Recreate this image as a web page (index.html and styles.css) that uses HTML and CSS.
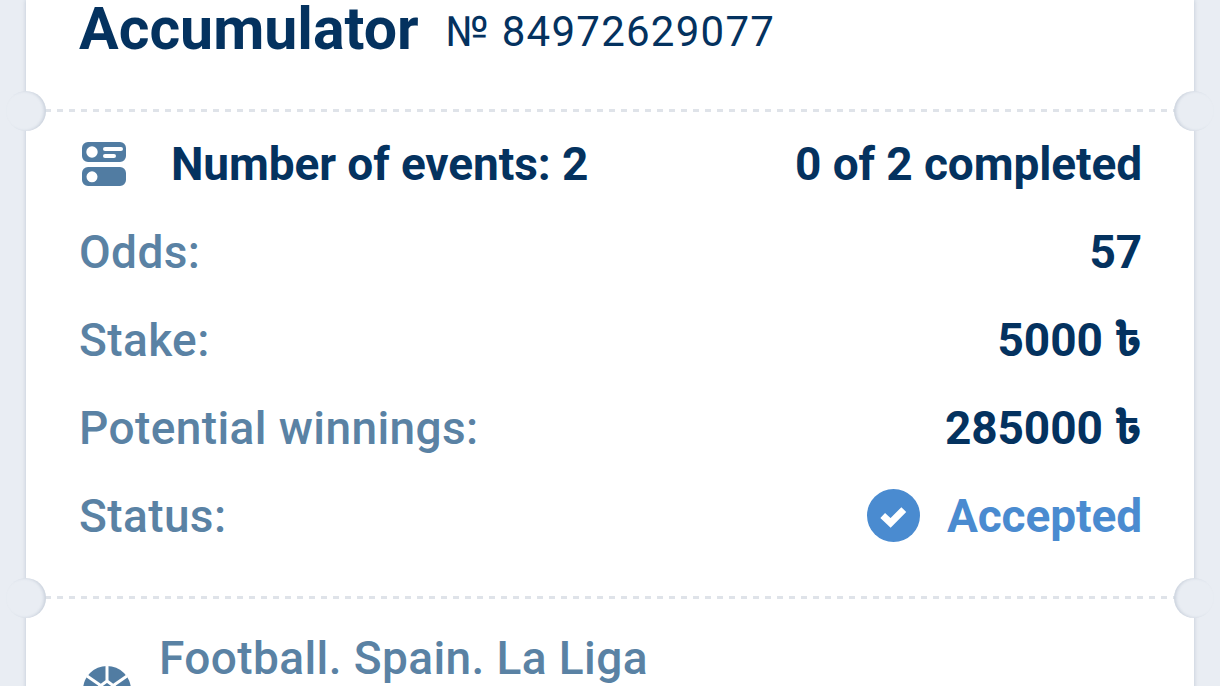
FILE: index.html
```html
<!DOCTYPE html>
<html lang="en">

<head>
    <meta charset="UTF-8">
    <title>Accumulator</title>
    <link rel="stylesheet" href="styles.css">
</head>

<body>
    <div class="ticket">
        <header class="ticket-head">
            <h1>Accumulator</h1>
            <span class="ticket-no">№ 84972629077</span>
        </header>

        <section class="ticket-part summary">
            <span class="notch notch-left"></span>
            <span class="notch notch-right"></span>
            <div class="row row-main">
                <span class="row-title">
                    <svg class="events-icon" viewBox="0 0 44 44">
                        <path fill="#517ca2" fill-rule="evenodd" d="M6 0h32a6 6 0 0 1 6 6v8a6 6 0 0 1-6 6H6a6 6 0 0 1-6-6V6a6 6 0 0 1 6-6zm4 4.300a5.700 5.700 0 1 0 0 11.400 5.700 5.700 0 0 0 0-11.400zM23 5a2 2 0 0 0 0 4h16a2 2 0 0 0 0-4H23zm0 7a2 2 0 0 0 0 4h9a2 2 0 0 0 0-4h-9z"/>
                        <path fill="#517ca2" fill-rule="evenodd" d="M6 25h32a6 6 0 0 1 6 6v7a6 6 0 0 1-6 6H6a6 6 0 0 1-6-6v-7a6 6 0 0 1 6-6zm4 4.300a5.500 5.500 0 1 0 0 11 5.500 5.500 0 0 0 0-11z"/>
                    </svg>
                    Number of events: 2
                </span>
                <span class="row-value">0 of 2 completed</span>
            </div>
            <div class="row">
                <span class="row-label">Odds:</span>
                <span class="row-value">57</span>
            </div>
            <div class="row">
                <span class="row-label">Stake:</span>
                <span class="row-value">5000 ৳</span>
            </div>
            <div class="row">
                <span class="row-label">Potential winnings:</span>
                <span class="row-value">285000 ৳</span>
            </div>
            <div class="row">
                <span class="row-label">Status:</span>
                <span class="row-value status">
                    <svg class="status-icon" viewBox="0 0 54 54">
                        <circle cx="27" cy="27" r="27" fill="#4a8bd0"/>
                        <path d="M16 27l8 7.500L37.500 21" fill="none" stroke="#fff" stroke-width="7"/>
                    </svg>
                    Accepted
                </span>
            </div>
        </section>

        <section class="ticket-part event">
            <span class="notch notch-left"></span>
            <span class="notch notch-right"></span>
            <svg class="ball-icon" viewBox="0 0 48 48">
                <circle cx="24" cy="24" r="24" fill="#517ca2"/>
                <path d="M24 0v15M24 15L12 24M24 15l12 9M17 19L4 10M31 19l13-9" fill="none" stroke="#fff" stroke-width="3"/>
            </svg>
            <div class="event-name">Football. Spain. La Liga</div>
        </section>
    </div>
</body>

</html>
```

FILE: styles.css
```css
body {
    margin: 0;
    height: 686px;
    overflow: hidden;
    background: #e9edf3;
    font-family: Roboto, "Noto Sans", "Noto Sans Bengali", "DejaVu Sans", sans-serif;
    color: #04325f;
}

.ticket {
    margin: 0 26px;
    background: #fff;
    box-shadow: 0 0 4px rgba(90, 110, 140, 0.3);
    min-height: 700px;
}

.ticket-head {
    height: 111px;
    padding: 2px 53px 0;
    box-sizing: border-box;
    display: flex;
    align-items: flex-start;
    gap: 27px;
}

.ticket-head h1 {
    margin: 0;
    font-size: 59px;
    font-weight: 700;
    line-height: 54px;
}

.ticket-no {
    font-size: 42px;
    line-height: 60px;
    letter-spacing: 1.25px;
}

.ticket-part {
    position: relative;
    padding: 0 52px 0 53px;
}

/* dashed tear line */
.ticket-part::before {
    content: "";
    position: absolute;
    left: 19px;
    right: 19px;
    top: -2px;
    height: 3px;
    background: repeating-linear-gradient(90deg, #dfe3e9 0 6px, transparent 6px 12px);
}

.notch {
    position: absolute;
    top: -20px;
    width: 40px;
    height: 40px;
    border-radius: 50%;
    background: #e9edf3;
}

.notch-left {
    left: -20px;
    box-shadow: inset -2px 0 3px rgba(90, 110, 140, 0.2);
}

.notch-right {
    right: -20px;
    box-shadow: inset 2px 0 3px rgba(90, 110, 140, 0.2);
}

.summary {
    height: 487px;
    padding-top: 9px;
    box-sizing: border-box;
}

.row {
    height: 88px;
    display: flex;
    align-items: center;
    justify-content: space-between;
    font-size: 46px;
    letter-spacing: -0.1px;
    line-height: 56px;
}

.row-title {
    display: flex;
    align-items: center;
    gap: 45px;
    font-weight: 700;
    margin-left: 3px;
}

.events-icon {
    width: 44px;
    height: 44px;
}

.row-label {
    color: #5a82a4;
    font-weight: 500;
    letter-spacing: 0.4px;
}

.row-value {
    font-weight: 700;
}

.status {
    display: flex;
    align-items: center;
    gap: 27px;
    color: #4a8bd0;
}

.status-icon {
    width: 53px;
    height: 53px;
    margin-top: -2px;
}

.event {
    padding-top: 32px;
    padding-left: 133px;
}

.event-name {
    font-size: 46px;
    font-weight: 500;
    letter-spacing: 0.4px;
    line-height: 56px;
    color: #5a82a4;
}

.ball-icon {
    position: absolute;
    left: 57px;
    top: 68px;
    width: 48px;
    height: 48px;
}
```
